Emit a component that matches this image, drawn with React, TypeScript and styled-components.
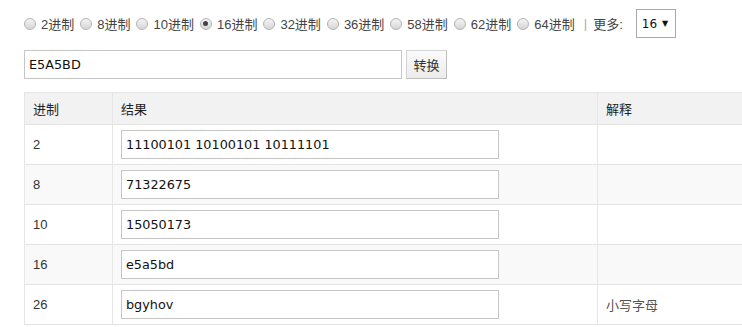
import React from "react";
import styled, { createGlobalStyle } from "styled-components";

const Global = createGlobalStyle`
  html, body { margin: 0; padding: 0; overflow: hidden; background: #fff; }
  body { font-family: "Liberation Sans", "Noto Sans CJK SC", sans-serif; font-size: 13px; color: #333; }
`;

const Page = styled.div`
  padding: 9px 0 0 24px;
  width: 760px;
`;

const Toolbar = styled.div`
  display: flex;
  align-items: center;
  height: 29px;
  color: #444;
`;

const RadioItem = styled.label`
  display: flex;
  align-items: center;
  margin-right: 6px;
  white-space: nowrap;
`;

const Radio = styled.span<{ $checked?: boolean }>`
  box-sizing: border-box;
  width: 12px;
  height: 12px;
  border-radius: 50%;
  border: 1px solid #b4b4b4;
  background: linear-gradient(#f4f4f4, #d6d6d6);
  margin-right: 5px;
  position: relative;
  &::after {
    content: "";
    display: ${(p) => (p.$checked ? "block" : "none")};
    position: absolute;
    left: 2.5px;
    top: 2.5px;
    width: 5px;
    height: 5px;
    border-radius: 50%;
    background: #444;
  }
`;

const Sep = styled.span`
  color: #aaa;
  margin: 0 6px 0 3px;
`;

const Select = styled.div`
  box-sizing: border-box;
  margin-left: 13px;
  width: 40px;
  height: 29px;
  border: 1px solid #a9a9a9;
  display: flex;
  align-items: center;
  padding-left: 5px;
  font-family: "DejaVu Sans", sans-serif;
  font-size: 12px;
  color: #111;
  gap: 5px;
`;

const Caret = styled.span`
  font-size: 8px;
`;

const InputRow = styled.div`
  display: flex;
  align-items: center;
  margin-top: 12px;
  gap: 4px;
`;

const TextBox = styled.div<{ $w: number }>`
  box-sizing: border-box;
  width: ${(p) => p.$w}px;
  height: 29px;
  border: 1px solid #c6c6c6;
  display: flex;
  align-items: center;
  padding-left: 4px;
  font-family: "DejaVu Sans", sans-serif;
  font-size: 12.8px;
  color: #111;
  background: #fff;
`;

const Button = styled.div`
  box-sizing: border-box;
  width: 41px;
  height: 29px;
  border: 1px solid #d4d4d4;
  border-right-color: #bdbdbd;
  border-bottom-color: #bdbdbd;
  background: linear-gradient(#fafafa, #ececec);
  display: flex;
  align-items: center;
  justify-content: center;
  color: #333;
  margin-top: -1px;
`;

const Table = styled.div`
  margin-top: 13px;
  display: grid;
  grid-template-columns: 88px 485px 1fr;
  border-top: 1px solid #e4e4e4;
  border-left: 1px solid #e6e6e6;
`;

const Cell = styled.div<{ $bg: string; $h: number }>`
  box-sizing: border-box;
  height: ${(p) => p.$h}px;
  background: ${(p) => p.$bg};
  border-right: 1px solid #e6e6e6;
  border-bottom: 1px solid #e4e4e4;
  display: flex;
  align-items: center;
  padding-left: 8px;
  color: #333;
`;

const HeadCell = styled(Cell)`
  color: #222;
`;

const Note = styled.span`
  color: #555;
`;

const bases = ["2进制", "8进制", "10进制", "16进制", "32进制", "36进制", "58进制", "62进制", "64进制"];

const rows = [
  { base: "2", value: "11100101 10100101 10111101", note: "" },
  { base: "8", value: "71322675", note: "" },
  { base: "10", value: "15050173", note: "" },
  { base: "16", value: "e5a5bd", note: "" },
  { base: "26", value: "bgyhov", note: "小写字母" },
];

export default function App() {
  return (
    <>
      <Global />
      <Page>
        <Toolbar>
          {bases.map((b) => (
            <RadioItem key={b}>
              <Radio $checked={b === "16进制"} />
              {b}
            </RadioItem>
          ))}
          <Sep>|</Sep>
          更多:
          <Select>
            16 <Caret>▼</Caret>
          </Select>
        </Toolbar>
        <InputRow>
          <TextBox $w={378}>E5A5BD</TextBox>
          <Button>转换</Button>
        </InputRow>
        <Table>
          <HeadCell $bg="#f2f2f2" $h={32}>进制</HeadCell>
          <HeadCell $bg="#f2f2f2" $h={32}>结果</HeadCell>
          <HeadCell $bg="#f2f2f2" $h={32}>解释</HeadCell>
          {rows.map((r, i) => {
            const bg = i % 2 === 1 ? "#f9f9f9" : "#fff";
            return (
              <React.Fragment key={r.base}>
                <Cell $bg={bg} $h={40}>{r.base}</Cell>
                <Cell $bg={bg} $h={40}>
                  <TextBox $w={378}>{r.value}</TextBox>
                </Cell>
                <Cell $bg={bg} $h={40}>
                  <Note>{r.note}</Note>
                </Cell>
              </React.Fragment>
            );
          })}
        </Table>
      </Page>
    </>
  );
}
